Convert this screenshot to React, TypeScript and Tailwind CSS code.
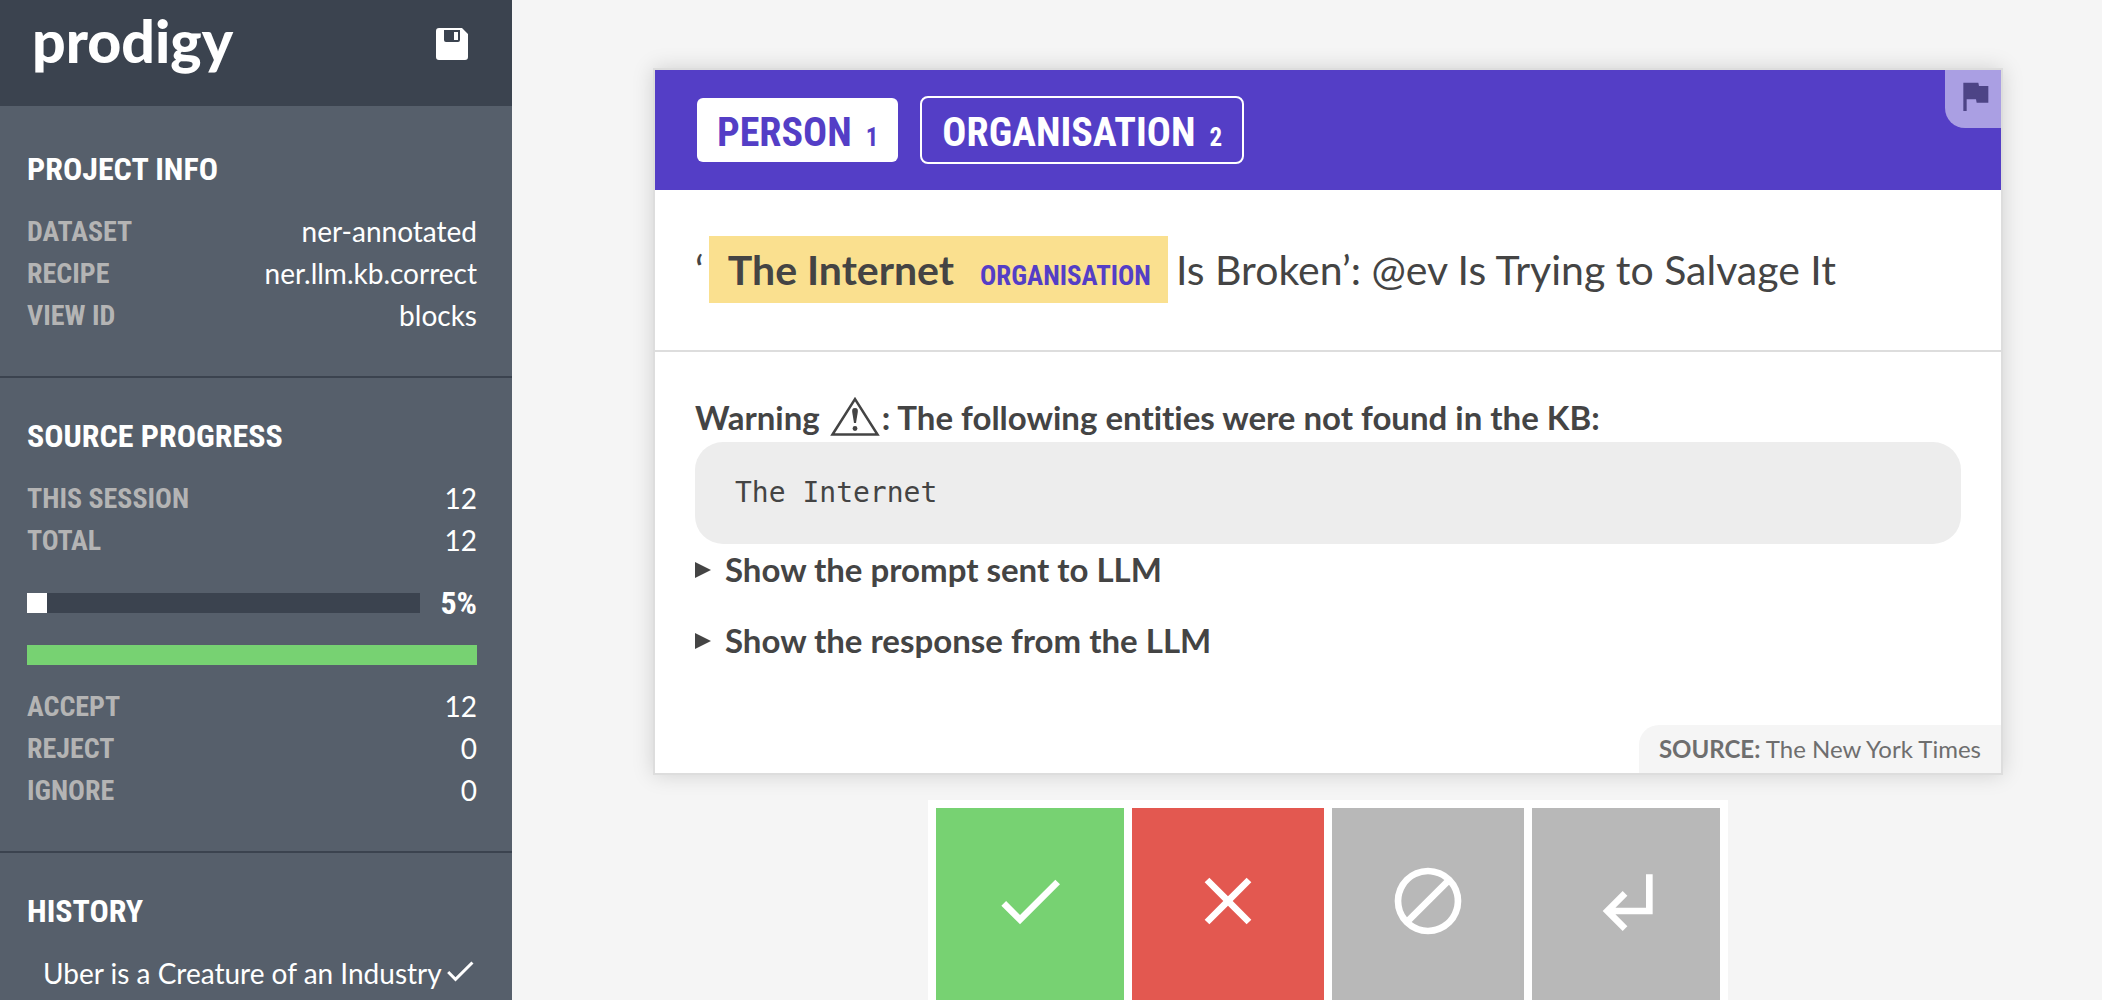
import type { ReactNode } from "react";

const condensed = "font-['Roboto_Condensed','Liberation_Sans_Narrow',Roboto,sans-serif]";

function SectionTitle({ children }: { children: ReactNode }) {
  return (
    <h2 className={`${condensed} mb-5 text-[32px] leading-[44px] font-bold text-white uppercase`}>
      {children}
    </h2>
  );
}

function Stats({ rows }: { rows: [string, string][] }) {
  return (
    <dl>
      {rows.map(([label, value]) => (
        <div key={label} className="flex items-start justify-between text-[28px]">
          <dt className={`${condensed} leading-[42px] font-bold text-[#b4b4b4] uppercase`}>{label}</dt>
          <dd className="leading-10 text-white">{value}</dd>
        </div>
      ))}
    </dl>
  );
}

function Icon({ d, className }: { d: string; className: string }) {
  return (
    <svg viewBox="0 0 24 24" fill="currentColor" className={className} aria-hidden="true">
      <path fillRule="evenodd" d={d} />
    </svg>
  );
}

const CHECK = "M9 16.17L4.83 12l-1.42 1.41L9 19 21 7l-1.41-1.41z";
const CLOSE =
  "M19 6.41L17.59 5 12 10.59 6.41 5 5 6.41 10.59 12 5 17.59 6.41 19 12 13.41 17.59 19 19 17.59 13.41 12z";
const BLOCK =
  "M12 2a10 10 0 1 0 0 20a10 10 0 0 0 0-20zM4 12a8 8 0 0 1 12.9-6.31L5.69 16.9A7.9 7.9 0 0 1 4 12zM12 20a7.9 7.9 0 0 1-4.9-1.69L18.31 7.1A8 8 0 0 1 12 20z";
const UNDO = "M11 9l1.42 1.42L8.83 14H18V4h2v12H8.83l3.59 3.58L11 21l-6-6 6-6z";
const FLAG = "M14.4 6L14 4H5v17h2v-7h5.6l.4 2h7V6z";

function Sidebar() {
  return (
    <aside className="w-[512px] shrink-0 bg-[#565f6b]">
      <header className="flex h-[106px] items-start justify-between bg-[#3b434f] pr-11 pl-8">
        <a href="#" className="text-[59px] leading-[82px] font-black text-white">
          prodigy
        </a>
        <button type="button" aria-label="Save" className="mt-7 text-white">
          <svg viewBox="0 0 32 32" className="size-8" fill="currentColor" aria-hidden="true">
            <path
              fillRule="evenodd"
              d="M3 0H26L32 6V29a3 3 0 0 1-3 3H3a3 3 0 0 1-3-3V3a3 3 0 0 1 3-3zM8 2V12a2 2 0 0 0 2 2H22a2 2 0 0 0 2-2V2zM18 4h4v8h-4z"
            />
          </svg>
        </button>
      </header>
      <section className="border-b-2 border-[#3b434f] pt-[41px] pr-[35px] pb-[39px] pl-[27px]">
        <SectionTitle>Project Info</SectionTitle>
        <Stats
          rows={[
            ["Dataset", "ner-annotated"],
            ["Recipe", "ner.llm.kb.correct"],
            ["View ID", "blocks"],
          ]}
        />
      </section>
      <section className="border-b-2 border-[#3b434f] pt-9 pr-[35px] pb-[39px] pl-[27px]">
        <SectionTitle>Source Progress</SectionTitle>
        <Stats
          rows={[
            ["This Session", "12"],
            ["Total", "12"],
          ]}
        />
        <div className="mt-5 mb-[21px] flex items-center gap-5">
          <div className="h-5 flex-1 bg-[#3b434f]">
            <div className="h-full bg-white" style={{ width: "5%" }} />
          </div>
          <span className={`${condensed} text-[32px] leading-[42px] font-bold text-white`}>5%</span>
        </div>
        <div className="mb-[21px] h-5 bg-[#77d272]" />
        <Stats
          rows={[
            ["Accept", "12"],
            ["Reject", "0"],
            ["Ignore", "0"],
          ]}
        />
      </section>
      <section className="pt-9 pr-[35px] pl-[27px]">
        <SectionTitle>History</SectionTitle>
        <button
          type="button"
          className="flex w-full items-start pl-4 text-[28px] leading-10 whitespace-nowrap text-white"
        >
          Uber is a Creature of an Industry
          <Icon d={CHECK} className="size-9 shrink-0" />
        </button>
      </section>
    </aside>
  );
}

function LabelButton({ name, hotkey, active }: { name: string; hotkey: string; active?: boolean }) {
  return (
    <button
      type="button"
      aria-pressed={!!active}
      className={`${condensed} flex h-[68px] items-baseline gap-3.5 rounded-lg border-2 bg-clip-padding px-5 text-[40px] leading-[70px] font-bold ${
        active ? "border-transparent bg-white text-[#543ec6]" : "border-white text-white"
      }`}
    >
      {name}
      <span className="text-[25px]">{hotkey}</span>
    </button>
  );
}

function Disclosure({ children }: { children: ReactNode }) {
  return (
    <details>
      <summary className="flex items-center gap-3.5 text-[33px] leading-[51px] font-bold">
        <svg viewBox="0 0 16 16" className="size-4 shrink-0" fill="currentColor" aria-hidden="true">
          <path d="M0 0L16 8L0 16z" />
        </svg>
        {children}
      </summary>
    </details>
  );
}

function TaskCard() {
  return (
    <article className="relative border-2 border-[#dddddd] bg-white text-[#444444] shadow-[0_0_20px_rgba(0,0,0,0.15)]">
      <header className="flex h-[120px] items-center gap-5 bg-[#543ec6] px-10">
        <LabelButton name="PERSON" hotkey="1" active />
        <LabelButton name="ORGANISATION" hotkey="2" />
      </header>
      <button
        type="button"
        aria-label="Flag task"
        className="absolute top-0 right-0 flex h-[58px] w-14 items-start rounded-bl-[20px] bg-white/50 pt-1.5 pl-2.5 text-[#4d4486]"
      >
        <Icon d={FLAG} className="size-10" />
      </button>
      <div className="border-b-2 border-[#dddddd] px-10 py-[46px] text-[41px] leading-[68px]">
        ‘
        <mark className="mr-2 ml-[5px] bg-[#fae08f] py-[9px] pr-[17px] pl-[19px] font-bold text-[#444444]">
          The Internet
          <span className={`${condensed} ml-[26px] text-[27px] leading-none text-[#543ec6]`}>ORGANISATION</span>
        </mark>
        Is Broken’: @ev Is Trying to Salvage It
      </div>
      <div className="px-10 pt-10 pb-[107px] [font-variant-ligatures:none]">
        <p className="text-[33px] leading-[50px] font-bold">
          Warning{" "}
          <svg viewBox="0 0 50 40" className="mx-0.5 inline h-10 w-[50px] align-[-6px]" aria-hidden="true">
            <path d="M2.5 38.5L25 3L47.5 38.5z" fill="none" stroke="currentColor" strokeWidth="2.5" />
            <path d="M25 12c2.6 0 3 1.5 2.8 4L26 27h-2L22.2 16C22 13.5 22.4 12 25 12z" fill="currentColor" />
            <circle cx="25" cy="32.5" r="2.4" fill="currentColor" />
          </svg>
          : The following entities were not found in the KB:
        </p>
        <pre className="rounded-[28px] bg-[#ededed] px-10 font-['DejaVu_Sans_Mono',monospace] text-[28px] leading-[102px]">
          The Internet
        </pre>
        <div className="flex flex-col gap-5">
          <Disclosure>Show the prompt sent to LLM</Disclosure>
          <Disclosure>Show the response from the LLM</Disclosure>
        </div>
      </div>
      <footer className="absolute right-0 bottom-0 rounded-tl-[20px] bg-[#f5f5f5] px-5 text-[24px] leading-[48px] text-[#6e6e6e]">
        <strong>SOURCE:</strong> The New York Times
      </footer>
    </article>
  );
}

const ACTIONS = [
  { label: "Accept", d: CHECK, color: "bg-[#77d272]" },
  { label: "Reject", d: CLOSE, color: "bg-[#e35850]" },
  { label: "Ignore", d: BLOCK, color: "bg-[#b8b8b8]" },
  { label: "Undo", d: UNDO, color: "bg-[#b8b8b8]" },
];

export default function App() {
  return (
    <div className="flex h-screen overflow-hidden bg-[#f5f5f5] font-['Lato',sans-serif]">
      <Sidebar />
      <main className="min-w-0 flex-1 pt-[68px] pr-[99px] pl-[141px]">
        <TaskCard />
        <div className="mx-auto mt-[25px] grid w-full max-w-[800px] grid-cols-4">
          {ACTIONS.map(({ label, d, color }) => (
            <button
              key={label}
              type="button"
              aria-label={label}
              className={`flex h-[200px] items-center justify-center border-x-4 border-t-8 border-white pb-1.5 text-white first:border-l-8 last:border-r-8 ${color}`}
            >
              <Icon d={d} className="size-20" />
            </button>
          ))}
        </div>
      </main>
    </div>
  );
}
